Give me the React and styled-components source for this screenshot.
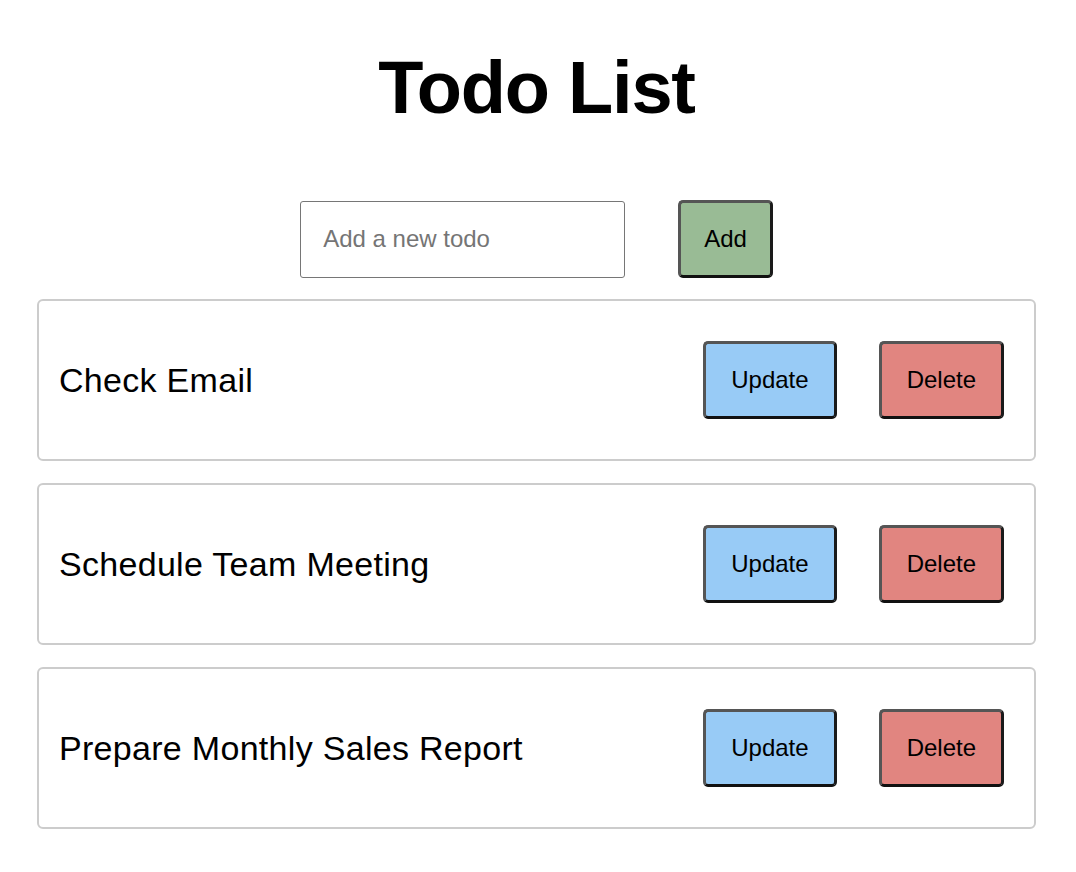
import React, { useState } from 'react'
import styled, { createGlobalStyle } from 'styled-components'

const GlobalStyle = createGlobalStyle`
  body {
    margin: 0;
    background: #fff;
    font-family: "Liberation Sans", Arial, sans-serif;
    color: #000;
  }
`

const Page = styled.div`
  padding: 51px 40px 40px 37px;
`

const Title = styled.h1`
  margin: 0 0 75px;
  text-align: center;
  font-size: 74px;
  line-height: 1;
  font-weight: bold;
  letter-spacing: -1.2px;
`

const AddRow = styled.form`
  display: flex;
  justify-content: center;
  align-items: center;
  gap: 53px;
  margin-bottom: 21px;
`

const Input = styled.input`
  box-sizing: border-box;
  width: 325px;
  height: 77px;
  padding: 0 22px;
  border: 1px solid #767676;
  border-radius: 3px;
  font-family: inherit;
  font-size: 24px;
  outline: none;

  &::placeholder {
    color: #757575;
  }
`

const Button = styled.button`
  box-sizing: border-box;
  height: 78px;
  padding: 0 ${({ pad }) => pad || 25}px;
  border: 3px solid #555;
  border-right-color: #1a1a1a;
  border-bottom-color: #111;
  border-radius: 5px;
  background: ${({ bg }) => bg};
  color: #000;
  font-family: inherit;
  font-size: 24px;
  cursor: pointer;
`

const List = styled.ul`
  list-style: none;
  margin: 0;
  padding: 0;
  display: flex;
  flex-direction: column;
  gap: 22px;
`

const Card = styled.li`
  display: flex;
  align-items: center;
  padding: 40px 30px 40px 20px;
  border: 2px solid #ccc;
  border-radius: 6px;
`

const TodoText = styled.span`
  flex: 1;
  font-size: 34px;
  letter-spacing: 0.3px;
`

const Actions = styled.div`
  display: flex;
  gap: 42px;
`

const initialTodos = ['Check Email', 'Schedule Team Meeting', 'Prepare Monthly Sales Report']

const App = () => {
  const [todos, setTodos] = useState(initialTodos)
  const [text, setText] = useState('')

  const addTodo = (e) => {
    e.preventDefault()
    if (!text.trim()) return
    setTodos([...todos, text.trim()])
    setText('')
  }

  return (
    <>
      <GlobalStyle />
      <Page>
        <Title>Todo List</Title>
        <AddRow onSubmit={addTodo}>
          <Input
            placeholder="Add a new todo"
            value={text}
            onChange={(e) => setText(e.target.value)}
          />
          <Button type="submit" bg="#99bb95" pad={23}>
            Add
          </Button>
        </AddRow>
        <List>
          {todos.map((todo, i) => (
            <Card key={`${todo}${i}`}>
              <TodoText>{todo}</TodoText>
              <Actions>
                <Button bg="#98cbf6">Update</Button>
                <Button bg="#e18580">Delete</Button>
              </Actions>
            </Card>
          ))}
        </List>
      </Page>
    </>
  )
}

export default App
